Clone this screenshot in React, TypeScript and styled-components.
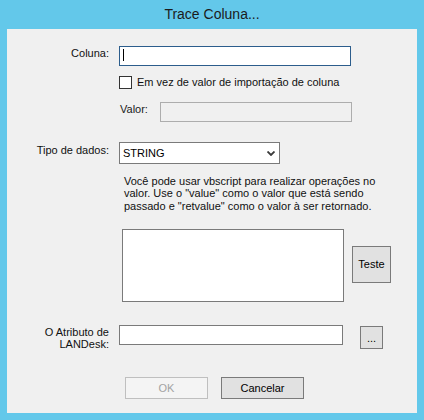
import React from "react";
import styled, { createGlobalStyle } from "styled-components";

const GlobalStyle = createGlobalStyle`
  html, body {
    margin: 0;
    padding: 0;
    background: #63c8ea;
  }
  body {
    font-family: "Liberation Sans", Arial, sans-serif;
    font-size: 11px;
    color: #000;
  }
`;

const Window = styled.div`
  width: 424px;
  height: 420px;
  display: flex;
  flex-direction: column;
  background: #63c8ea;
`;

const TitleBar = styled.div`
  height: 29px;
  display: flex;
  align-items: center;
  justify-content: center;
  font-size: 14px;
  color: #1b1b1b;
  padding-bottom: 1px;
  box-sizing: border-box;
`;

const Client = styled.div`
  flex: 1;
  margin: 0 7px 7px;
  background: #f0f0f0;
  display: flex;
  flex-direction: column;
  padding-top: 17px;
`;

const Row = styled.div<{ $top?: number; $left?: number }>`
  display: flex;
  align-items: flex-start;
  margin-top: ${(p) => p.$top ?? 0}px;
  margin-left: ${(p) => p.$left ?? 0}px;
`;

const Label = styled.label<{ $pad?: number }>`
  width: 102px;
  margin-right: 10px;
  text-align: right;
  line-height: 14px;
  padding-top: ${(p) => p.$pad ?? 0}px;
  white-space: nowrap;
  color: #111;
`;

const MultiLabel = styled(Label)`
  line-height: 12px;
`;

const InlineLabel = styled.label`
  width: 40px;
  line-height: 14px;
  color: #1a1a1a;
`;

const TextBox = styled.div<{ $w: number; $focused?: boolean; $disabled?: boolean }>`
  box-sizing: border-box;
  width: ${(p) => p.$w}px;
  height: 20px;
  border: 1px solid
    ${(p) => (p.$focused ? "#2c5d8c" : p.$disabled ? "#adadad" : "#7a7a7a")};
  background: ${(p) => (p.$disabled ? "#f0f0f0" : "#fff")};
  position: relative;
`;

const Caret = styled.span`
  position: absolute;
  left: 3px;
  top: 2px;
  width: 1px;
  height: 12px;
  background: #000;
`;

const CheckRow = styled.label`
  display: flex;
  align-items: center;
  gap: 5px;
  height: 13px;
  line-height: 13px;
  color: #111;
`;

const CheckBox = styled.span`
  box-sizing: border-box;
  width: 13px;
  height: 13px;
  border: 1px solid #333;
  background: #fff;
`;

const Select = styled.div`
  box-sizing: border-box;
  width: 161px;
  height: 22px;
  border: 1px solid #7a7a7a;
  background: #fff;
  display: flex;
  align-items: center;
  justify-content: space-between;
  padding: 0 4px 0 3px;
`;

const Help = styled.p`
  margin: 11px 0 0 117px;
  line-height: 12.3px;
  color: #111;
`;

const TextArea = styled.div`
  box-sizing: border-box;
  width: 222px;
  height: 73px;
  border: 1px solid #7a7a7a;
  background: #fff;
`;

const Button = styled.button<{ $w: number; $h: number; $top?: number; $disabled?: boolean }>`
  box-sizing: border-box;
  width: ${(p) => p.$w}px;
  height: ${(p) => p.$h}px;
  margin-top: ${(p) => p.$top ?? 0}px;
  padding: 0;
  font-family: inherit;
  font-size: 11px;
  color: ${(p) => (p.$disabled ? "#a3a3a3" : "#000")};
  background: ${(p) => (p.$disabled ? "#f4f4f4" : "#e1e1e1")};
  border: 1px solid ${(p) => (p.$disabled ? "#bfbfbf" : "#7a7a7a")};
  border-radius: 0;
`;

const DotsButton = styled(Button)`
  display: flex;
  align-items: flex-end;
  justify-content: center;
  padding-bottom: 5px;
  line-height: 10px;
`;

const ButtonBar = styled.div`
  display: flex;
  gap: 13px;
  margin: 27px 0 0 118px;
`;

const Chevron = () => (
  <svg width="8" height="5" viewBox="0 0 8 5">
    <path d="M0.5 0.5 L4 4 L7.5 0.5" fill="none" stroke="#3a3a3a" strokeWidth="1.8" />
  </svg>
);

export default function App() {
  return (
    <Window>
      <GlobalStyle />
      <TitleBar>Trace Coluna...</TitleBar>
      <Client>
        <Row>
          <Label>Coluna:</Label>
          <TextBox $w={232} $focused>
            <Caret />
          </TextBox>
        </Row>

        <Row $top={10} $left={112}>
          <CheckRow>
            <CheckBox />
            Em vez de valor de importação de coluna
          </CheckRow>
        </Row>

        <Row $top={13} $left={113}>
          <InlineLabel>Valor:</InlineLabel>
          <TextBox $w={192} $disabled />
        </Row>

        <Row $top={20}>
          <Label $pad={1}>Tipo de dados:</Label>
          <Select>
            <span>STRING</span>
            <Chevron />
          </Select>
        </Row>

        <Help>
          Você pode usar vbscript para realizar operações no
          <br />
          valor. Use o "value" como o valor que está sendo
          <br />
          passado e "retvalue" como o valor à ser retornado.
        </Help>

        <Row $top={17} $left={115}>
          <TextArea />
          <Button $w={39} $h={37} $top={17} style={{ marginLeft: 8 }}>
            Teste
          </Button>
        </Row>

        <Row $top={23}>
          <MultiLabel $pad={1}>
            O Atributo de
            <br />
            LANDesk:
          </MultiLabel>
          <TextBox $w={224} />
          <DotsButton $w={23} $h={23} $top={1} style={{ marginLeft: 17 }}>
            ...
          </DotsButton>
        </Row>

        <ButtonBar>
          <Button $w={83} $h={22} $disabled>
            OK
          </Button>
          <Button $w={83} $h={22}>
            Cancelar
          </Button>
        </ButtonBar>
      </Client>
    </Window>
  );
}
